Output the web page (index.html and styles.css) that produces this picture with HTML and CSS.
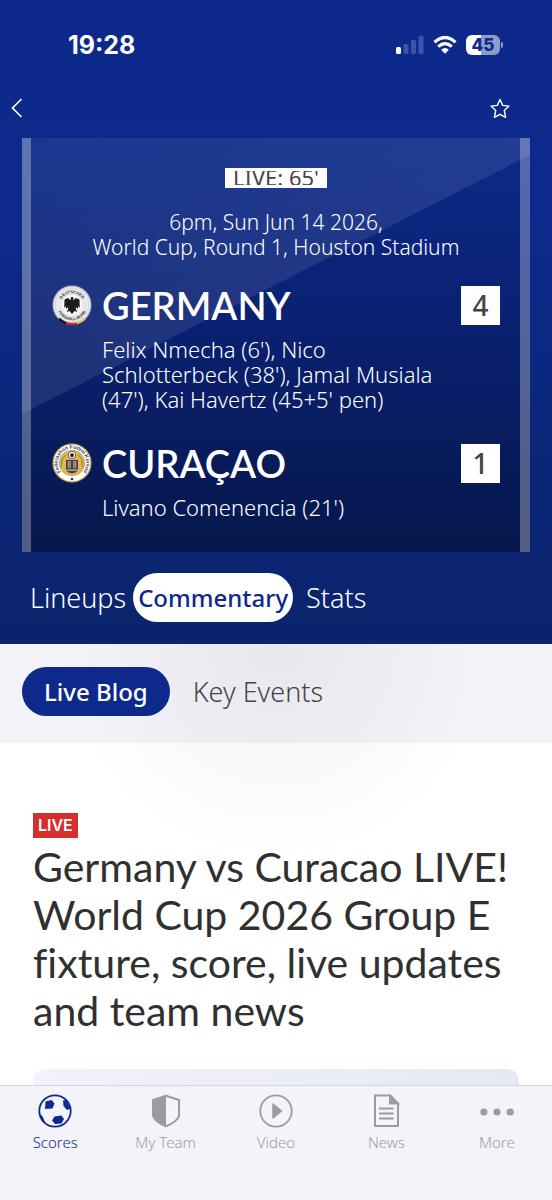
FILE: index.html
```html
<!DOCTYPE html>
<html lang="en">
<head>
    <meta charset="UTF-8">
    <meta name="viewport" content="width=device-width, initial-scale=1.0">
    <title>Germany vs Curacao</title>
    <link rel="stylesheet" href="styles.css">
</head>
<body>
    <header class="hero">
        <!-- Status bar -->
        <div class="status-bar">
            <span class="clock">19:28</span>
            <div class="status-icons">
                <svg class="signal" viewBox="0 0 28 18" width="28" height="18">
                    <rect x="0" y="11" width="5" height="7" rx="1.5" fill="#fff"/>
                    <rect x="7.5" y="8" width="5" height="10" rx="1.5" fill="#3d53a3"/>
                    <rect x="15" y="4" width="5" height="14" rx="1.5" fill="#3d53a3"/>
                    <rect x="22.5" y="0" width="5" height="18" rx="1.5" fill="#3d53a3"/>
                </svg>
                <svg class="wifi" viewBox="0 0 24 18" width="24" height="18">
                    <path d="M1.500 6.200Q12-3.200 22.500 6.200" fill="none" stroke="#fff" stroke-width="3.400"/>
                    <path d="M5.200 10.600Q12 4.600 18.800 10.600" fill="none" stroke="#fff" stroke-width="3.200"/>
                    <path d="M8.100 13.800Q12 10 15.900 13.800L12 17.800Z" fill="#fff"/>
                </svg>
                <div class="battery"><span class="battery-level">45</span></div>
            </div>
        </div>

        <div class="nav-bar">
            <button class="icon-btn" aria-label="Back">
                <svg viewBox="0 0 12 20" width="12" height="20"><path d="M10.500 1L1.500 10L10.500 19" fill="none" stroke="#fff" stroke-width="1.700"/></svg>
            </button>
            <button class="icon-btn" aria-label="Favourite">
                <svg viewBox="0 0 20 21" width="20" height="21"><path d="M10 1.500L12.700 7.400L19 8.100L14.300 12.500L15.600 19.300L10 16.300L4.400 19.300L5.700 12.500L1 8.100L7.300 7.400Z" fill="none" stroke="#fff" stroke-width="1.400" stroke-linejoin="round"/></svg>
            </button>
        </div>

        <!-- Scoreboard -->
        <section class="scoreboard">
            <div class="match-clock"><span>LIVE: 65'</span></div>
            <p class="match-info">6pm, Sun Jun 14 2026,<br>World Cup, Round 1, Houston Stadium</p>

            <div class="team">
                <svg class="badge" viewBox="0 0 40 40" width="40" height="40">
                    <circle cx="20" cy="20" r="19.500" fill="#b9bdcb"/>
                    <circle cx="20" cy="20" r="18" fill="#fff"/>
                    <circle cx="20" cy="20" r="17" fill="#e8e8ea" stroke="#c4c4c8" stroke-width="0.600"/>
                    <circle cx="20" cy="20" r="10.200" fill="#f8f8f8"/>
                    <path d="M7 33.600A19 19 0 0 0 14 38.100" fill="none" stroke="#161616" stroke-width="2.400"/>
                    <path d="M14 38A19 19 0 0 0 25 38.300" fill="none" stroke="#cf2638" stroke-width="2.400"/>
                    <path d="M25 38.200A19 19 0 0 0 33 33.600" fill="none" stroke="#e9c64a" stroke-width="2.400"/>
                    <path d="M19 12L21.500 12.300L21.200 15.200L24 13L27.500 14.500L27.800 23L26.500 21L25.800 24.500L24.600 22L23.600 24L25.500 27L22.500 26L20 29L17.500 26L14.500 27L16.400 24L15.400 22L14.200 24.500L13.500 21L12.200 23L12.500 14.500L16 13L18.600 15.200Z" fill="#1c1c1e"/>
                    <path id="dfb-top" d="M8.200 20A11.800 11.800 0 0 1 31.800 20" fill="none"/>
                    <path id="dfb-bottom" d="M4.800 20A15.200 15.200 0 0 0 35.200 20" fill="none"/>
                    <text class="badge-text dark"><textPath href="#dfb-top" startOffset="50%">DEUTSCHER</textPath></text>
                    <text class="badge-text dark"><textPath href="#dfb-bottom" startOffset="50%">FUSSBALL-BUND</textPath></text>
                </svg>
                <h2 class="team-name">GERMANY</h2>
                <span class="score">4</span>
                <p class="scorers">Felix Nmecha (6'), Nico Schlotterbeck (38'), Jamal Musiala (47'), Kai Havertz (45+5' pen)</p>
            </div>

            <div class="team">
                <svg class="badge" viewBox="0 0 40 40" width="40" height="40">
                    <circle cx="20" cy="20" r="19" fill="#fff" stroke="#c99a3b" stroke-width="1.200"/>
                    <circle cx="20" cy="20" r="12.800" fill="#e3b54c" stroke="#b99036" stroke-width="0.600"/>
                    <path d="M9.500 24Q8.500 16 14 12M30.500 24Q31.500 16 26 12" fill="none" stroke="#8b9a43" stroke-width="1.500"/>
                    <path d="M14 17H26V26Q26 29 20 30.500Q14 29 14 26Z" fill="#2c3e76"/>
                    <path d="M15.500 18H19V25H15.500ZM21 18H24.500V25H21Z" fill="#b1854e"/>
                    <path d="M14.500 27H25.500" stroke="#e8d45a" stroke-width="1.200"/>
                    <circle cx="20" cy="12" r="3.700" fill="#fff" stroke="#25262b" stroke-width="0.700"/>
                    <path d="M20 10L22 11.600L21.200 14H18.800L18 11.600Z" fill="#17191f"/>
                    <circle cx="20" cy="36" r="1.300" fill="#24346f"/>
                    <path id="ffk-ring" d="M12 32A14.400 14.400 0 1 1 28 32" fill="none"/>
                    <text class="badge-text blue"><textPath href="#ffk-ring" startOffset="50%">Federashon Futbol Korsou</textPath></text>
                </svg>
                <h2 class="team-name">CURAÇAO</h2>
                <span class="score">1</span>
                <p class="scorers">Livano Comenencia (21')</p>
            </div>
        </section>

        <nav class="match-tabs">
            <button class="match-tab">Lineups</button>
            <button class="match-tab active">Commentary</button>
            <button class="match-tab">Stats</button>
        </nav>
    </header>

    <main class="content">
        <nav class="sub-tabs">
            <button class="sub-tab active">Live Blog</button>
            <button class="sub-tab">Key Events</button>
        </nav>
        <article class="story">
            <span class="live-tag">LIVE</span>
            <h1 class="headline">Germany vs Curacao LIVE! World Cup 2026 Group E fixture, score, live updates and team news</h1>
            <div class="story-card"></div>
        </article>
    </main>

    <!-- Bottom tab bar -->
    <nav class="tab-bar">
        <a class="tab-item active" href="#">
            <svg viewBox="0 0 34 34" width="34" height="34">
                <circle cx="17" cy="17" r="15.700" fill="none" stroke="currentColor" stroke-width="1.800"/>
                <path d="M7.500 7.500L13.500 6L16.500 9.500L14.500 14.500L7 15ZM16.500 22.500L23.500 21.500L26 25L23.500 29.500L17 30L14 26.500ZM25 6.500L28 6L32.500 14.500L29 16L25.500 12ZM1.800 19.500L4.500 22.500L7.500 29L4.500 27.500L1.500 22Z" fill="currentColor"/>
            </svg>
            <span>Scores</span>
        </a>
        <a class="tab-item" href="#">
            <svg viewBox="0 0 34 34" width="34" height="34">
                <path d="M17 1.800L30 6V22Q28 28 17 32.200Q6 28 4 22V6Z" fill="none" stroke="currentColor" stroke-width="2" stroke-linejoin="round"/>
                <path d="M17 1.500L4 5.800V22Q6 28 17 32.200Z" fill="currentColor"/>
            </svg>
            <span>My Team</span>
        </a>
        <a class="tab-item" href="#">
            <svg viewBox="0 0 34 34" width="34" height="34">
                <circle cx="17" cy="17" r="15.700" fill="none" stroke="currentColor" stroke-width="1.800"/>
                <path d="M14 10L22.500 17L14 24Z" fill="currentColor" stroke="currentColor" stroke-width="1.500" stroke-linejoin="round"/>
            </svg>
            <span>Video</span>
        </a>
        <a class="tab-item" href="#">
            <svg viewBox="0 0 34 34" width="34" height="34">
                <path d="M6 1.500H21L29 9.500V32H6Z" fill="none" stroke="currentColor" stroke-width="2" stroke-linejoin="round"/>
                <path d="M21 1.500V9.500H29ZM10 14.500H24.500M10 19.500H24.500M10 24.500H24.500" fill="currentColor" stroke="currentColor" stroke-width="2"/>
            </svg>
            <span>News</span>
        </a>
        <a class="tab-item" href="#">
            <svg viewBox="0 0 34 34" width="34" height="34">
                <circle cx="3.800" cy="18" r="3.600" fill="currentColor"/>
                <circle cx="17" cy="18" r="3.600" fill="currentColor"/>
                <circle cx="30.200" cy="18" r="3.600" fill="currentColor"/>
            </svg>
            <span>More</span>
        </a>
    </nav>
</body>
</html>
```

FILE: styles.css
```css
* {
    box-sizing: border-box;
}
body {
    margin: 0;
    background-color: #fff;
    font-family: "Noto Sans", "Open Sans", sans-serif;
    font-weight: 300;
    color: #333;
}
h1, h2, p {
    margin: 0;
}
button {
    border: none;
    background: none;
    padding: 0;
    font: inherit;
    color: inherit;
    cursor: pointer;
}
svg {
    display: block;
}

/* Blue top area */
.hero {
    background: linear-gradient(#0c288b 0%, #0d298b 35%, #0a246b 100%);
    color: #fff;
}
.status-bar {
    display: flex;
    justify-content: space-between;
    align-items: center;
    height: 90px;
    padding: 0 48px 0 68px;
}
.clock {
    font-family: Inter, sans-serif;
    font-size: 25px;
    font-weight: 700;
}
.status-icons {
    display: flex;
    align-items: center;
    gap: 9px;
}
.battery {
    position: relative;
    width: 34px;
    height: 20px;
    margin-right: 4px;
    border-radius: 6px;
    background: linear-gradient(90deg, #fff 45%, #8f9bcb 45%);
    text-align: center;
}
.battery::after {
    content: "";
    position: absolute;
    top: 7px;
    right: -3px;
    width: 2px;
    height: 6px;
    border-radius: 0 2px 2px 0;
    background-color: #8f9bcb;
}
.battery-level {
    display: block;
    font-family: Inter, sans-serif;
    font-size: 17px;
    font-weight: 800;
    line-height: 20px;
    color: #0d298b;
}
.nav-bar {
    display: flex;
    justify-content: space-between;
    align-items: center;
    height: 36px;
    padding: 0 42px 0 11px;
}

/* Scoreboard */
.scoreboard {
    margin: 12px 22px 0;
    padding: 30px 20px 32px 21px;
    border-left: 9px solid rgba(255, 255, 255, 0.3);
    border-right: 10px solid rgba(255, 255, 255, 0.3);
    background:
        linear-gradient(153deg, rgba(255, 255, 255, 0.06) 0%, rgba(255, 255, 255, 0.09) 41%, transparent 41%) border-box,
        linear-gradient(#0c2a8a 0%, #0a2172 45%, #06174b 100%) border-box;
}
.match-clock {
    width: 102px;
    height: 20px;
    margin: 0 auto;
    padding: 3px 0;
    background-color: #fff;
    color: #444;
    text-align: center;
}
.match-clock span {
    display: block;
    height: 14px;
    overflow: hidden;
    font-size: 22px;
    font-weight: 400;
    line-height: 13px;
}
.match-info {
    margin-top: 22px;
    font-size: 21px;
    line-height: 25px;
    text-align: center;
}
.team {
    display: grid;
    grid-template-columns: 40px 1fr 39px;
    column-gap: 10px;
    row-gap: 12px;
    align-items: center;
    margin-top: 25px;
}
.team + .team {
    margin-top: 31px;
}
.team-name {
    font-family: Lato, sans-serif;
    font-size: 38px;
    font-weight: 600;
    line-height: 40px;
}
.score {
    height: 39px;
    background-color: #fff;
    color: #444;
    font-size: 28px;
    font-weight: 500;
    line-height: 39px;
    text-align: center;
}
.scorers {
    grid-column: 2;
    font-size: 22px;
    line-height: 25px;
}
.badge-text {
    font-family: "Liberation Sans", sans-serif;
    font-weight: 700;
    text-anchor: middle;
}
.dark {
    font-size: 4px;
    fill: #333;
}
.blue {
    font-size: 5px;
    fill: #26387e;
}

/* Tabs */
.match-tabs {
    display: flex;
    align-items: center;
    gap: 13px;
    padding: 21px 30px 22px;
    font-size: 27px;
}
.match-tab {
    height: 49px;
}
.match-tab.active {
    margin-left: -6px;
    padding: 0 5px;
    border-radius: 25px;
    background-color: #fff;
    color: #0d298b;
    font-size: 24px;
    font-weight: 500;
}
.content {
    position: relative;
}
/* Soft shade spilling down from the header */
.content::before {
    content: "";
    position: absolute;
    top: 0;
    left: 0;
    right: 0;
    height: 220px;
    background: radial-gradient(circle 220px at 50% 0, rgba(0, 0, 0, 0.05), transparent);
    pointer-events: none;
}
.sub-tabs {
    display: flex;
    align-items: center;
    gap: 23px;
    height: 99px;
    padding: 0 22px 5px;
    background-color: #f4f3fa;
    font-size: 27px;
}
.sub-tab {
    position: relative;
    height: 49px;
    color: #444;
}
.sub-tab.active {
    padding: 0 22px;
    border-radius: 25px;
    background-color: #0d298b;
    color: #fff;
    font-size: 24px;
    font-weight: 500;
}

/* Story */
.story {
    padding: 70px 33px 131px;
}
.live-tag {
    display: block;
    width: max-content;
    padding: 0 5px;
    background-color: #d62d2d;
    color: #fff;
    font-family: Inter, sans-serif;
    font-size: 16px;
    font-weight: 600;
    line-height: 25px;
}
.headline {
    margin-top: 5px;
    font-family: Lato, sans-serif;
    font-size: 41px;
    font-weight: 400;
    line-height: 48px;
    font-variant-ligatures: none;
    color: #303030;
}
.story-card {
    height: 16px;
    margin-top: 34px;
    border-radius: 12px 12px 0 0;
    background: linear-gradient(90deg, #f1f2fb, #e6e9f4);
}

/* Bottom tab bar */
.tab-bar {
    position: fixed;
    left: 0;
    right: 0;
    bottom: 0;
    display: grid;
    grid-template-columns: repeat(5, 1fr);
    height: 115px;
    padding-top: 8px;
    border-top: 1px solid #d5d5de;
    background-color: #f4f3fa;
}
.tab-item {
    display: flex;
    flex-direction: column;
    align-items: center;
    gap: 4px;
    color: #9c9ca0;
    font-size: 15px;
    line-height: 20px;
    text-decoration: none;
}
.tab-item.active {
    color: #0d298b;
}
```
